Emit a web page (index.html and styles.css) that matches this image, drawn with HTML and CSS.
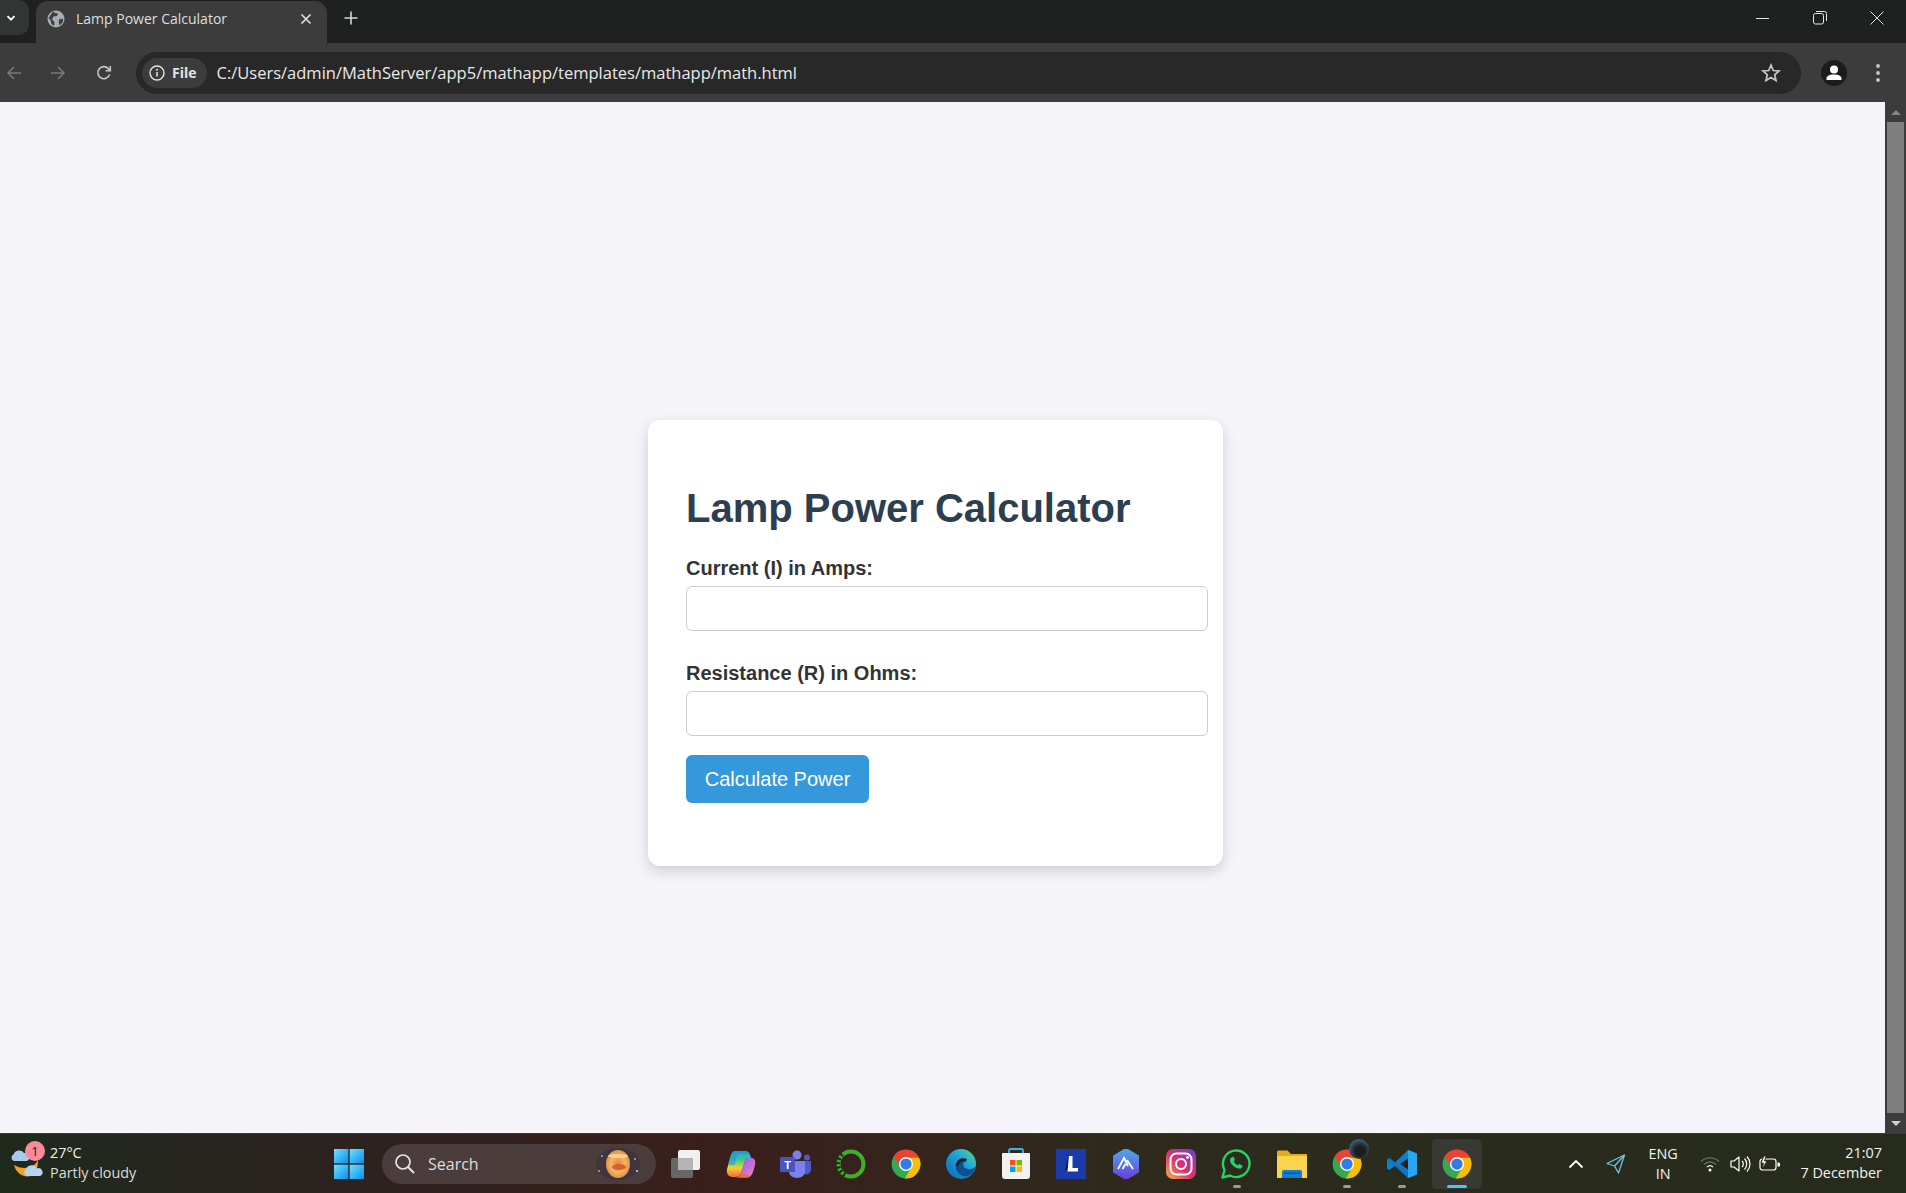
FILE: index.html
```html
<!DOCTYPE html>
<html lang="en">
<head>
  <meta charset="UTF-8" />
  <meta name="viewport" content="width=device-width, initial-scale=1.0"/>
  <title>Lamp Power Calculator</title>
  <link rel="stylesheet" href="styles.css">
</head>
<body>
  <svg class="defs" width="0" height="0">
    <symbol id="chrome" viewBox="0 0 24 24">
      <circle cx="12" cy="12" r="11.5" fill="#34a853"/>
      <path d="M2.1 6.2A11.5 11.5 0 0 1 22.4 7H12L7.6 14.6Z" fill="#ea4335"/>
      <path d="M22.4 7A11.5 11.5 0 0 1 11 23.5L16.4 14.6L12 7Z" fill="#fbbc04"/>
      <circle cx="12" cy="12" r="5.6" fill="#fff"/>
      <circle cx="12" cy="12" r="4.5" fill="#2f7de8"/>
    </symbol>
    <linearGradient id="winblue" x1="0" y1="0" x2="1" y2="1">
      <stop offset="0" stop-color="#6fe3fb"/>
      <stop offset="1" stop-color="#0a8cf0"/>
    </linearGradient>
    <linearGradient id="igrad" x1="0" y1="1" x2="1" y2="0">
      <stop offset="0" stop-color="#fcb045"/>
      <stop offset=".45" stop-color="#e1306c"/>
      <stop offset="1" stop-color="#6a3fd0"/>
    </linearGradient>
    <linearGradient id="edgegrad" x1="0" y1="1" x2="1" y2="0">
      <stop offset="0" stop-color="#0b62b5"/>
      <stop offset=".6" stop-color="#1fa7dc"/>
      <stop offset="1" stop-color="#5fdc7c"/>
    </linearGradient>
    <linearGradient id="hexgrad" x1="0" y1="0" x2="0" y2="1">
      <stop offset="0" stop-color="#4fa8e8"/>
      <stop offset="1" stop-color="#6a3fe0"/>
    </linearGradient>
    <linearGradient id="copright" x1="0" y1="0" x2="1" y2="1">
      <stop offset="0" stop-color="#7a6ff0"/>
      <stop offset=".55" stop-color="#c56be0"/>
      <stop offset="1" stop-color="#f58ab0"/>
    </linearGradient>
    <linearGradient id="copleft" x1="0" y1="0" x2="0" y2="1">
      <stop offset="0" stop-color="#1ba8d8"/>
      <stop offset=".35" stop-color="#3ecb8a"/>
      <stop offset=".65" stop-color="#f5d030"/>
      <stop offset="1" stop-color="#f06a3a"/>
    </linearGradient>
    <radialGradient id="planet" cx=".5" cy=".5" r=".55">
      <stop offset="0" stop-color="#e8823a"/>
      <stop offset=".55" stop-color="#f4b566"/>
      <stop offset="1" stop-color="#d98a3c"/>
    </radialGradient>
  </svg>

  <header class="chrome">
    <div class="tabstrip">
      <div class="tab-search">
        <svg width="12" height="12" viewBox="0 0 12 12"><path d="M2.5 4.2 6 7.7l3.5-3.5" fill="none" stroke="#fff" stroke-width="1.8"/></svg>
      </div>
      <div class="tab">
        <svg class="favicon" width="18" height="18" viewBox="0 0 18 18">
          <circle cx="9" cy="9" r="8.5" fill="#a9adb3"/>
          <path d="M6 1.5 9 3.5 11 3 10 6 6.5 6.5 5 9.5 7.5 12 7 16 4.5 14 3.5 10 1.5 8ZM12 9.5l4.2-.8-.4 3.3-3 3.5-1-3Z" fill="#3d3e40"/>
        </svg>
        <span class="tab-title">Lamp Power Calculator</span>
        <svg class="tab-close" width="12" height="12" viewBox="0 0 12 12"><path d="M1.5 1.5l9 9m0-9l-9 9" stroke="#e3e3e3" stroke-width="1.6"/></svg>
      </div>
      <svg class="newtab" width="14" height="14" viewBox="0 0 14 14"><path d="M7 .5v13M.5 7h13" stroke="#d5d5d5" stroke-width="1.6"/></svg>
      <div class="winctl">
        <svg width="14" height="14" viewBox="0 0 14 14"><path d="M0 7.5h13" stroke="#e6e6e6" stroke-width="1"/></svg>
        <svg width="14" height="14" viewBox="0 0 14 14"><rect x=".5" y="2.5" width="10" height="10.5" rx="2" fill="none" stroke="#e6e6e6"/><path d="M3 .5h8.500a2 2 0 0 1 2 2V10" fill="none" stroke="#e6e6e6"/></svg>
        <svg width="14" height="14" viewBox="0 0 14 14"><path d="M.5.5l13 13m0-13l-13 13" stroke="#e6e6e6" stroke-width="1"/></svg>
      </div>
    </div>
    <div class="toolbar">
      <svg class="nav" width="16" height="16" viewBox="0 0 16 16"><path d="M15 8H2M8 2 2 8l6 6" fill="none" stroke="#797a7b" stroke-width="1.6"/></svg>
      <svg class="nav" width="16" height="16" viewBox="0 0 16 16"><path d="M1 8h13M8 2l6 6-6 6" fill="none" stroke="#797a7b" stroke-width="1.6"/></svg>
      <svg class="nav reload" width="16" height="16" viewBox="0 0 16 16"><path d="M13.600 9.500A6 6 0 1 1 12.300 3.600L14 5.500M14.300 1v4.700H9.600" fill="none" stroke="#c7c7c7" stroke-width="1.6"/></svg>
      <div class="omnibox">
        <div class="chip">
          <svg width="16" height="16" viewBox="0 0 16 16"><circle cx="8" cy="8" r="7" fill="none" stroke="#e3e3e3" stroke-width="1.400"/><path d="M8 7v4.500" stroke="#e3e3e3" stroke-width="1.500"/><circle cx="8" cy="4.800" r="1" fill="#e3e3e3"/></svg>
          <span>File</span>
        </div>
        <span class="url">C:/Users/admin/MathServer/app5/mathapp/templates/mathapp/math.html</span>
        <svg class="star" width="20" height="20" viewBox="0 0 20 20"><path d="M10 2.200l2.300 5.300 5.700.5-4.300 3.800 1.300 5.600-5-3-5 3 1.300-5.600L2 8l5.700-.5Z" fill="none" stroke="#c7c7c7" stroke-width="1.700"/></svg>
      </div>
      <div class="avatar">
        <svg width="18" height="18" viewBox="0 0 18 18"><circle cx="9" cy="5.500" r="4" fill="#fff"/><path d="M1.500 16v-1.500C1.500 12 4.500 10.500 9 10.500s7.500 1.500 7.500 4V16Z" fill="#fff"/></svg>
      </div>
      <svg class="kebab" width="6" height="20" viewBox="0 0 6 20"><circle cx="3" cy="3" r="1.900" fill="#c7c7c7"/><circle cx="3" cy="10" r="1.900" fill="#c7c7c7"/><circle cx="3" cy="17" r="1.900" fill="#c7c7c7"/></svg>
    </div>
  </header>

  <div class="viewport">
    <main class="page">
      <div class="card">
        <h1>Lamp Power Calculator</h1>
        <form class="calc-form" onsubmit="return false">
          <label for="current">Current (I) in Amps:</label>
          <input type="text" id="current" />
          <label for="resistance">Resistance (R) in Ohms:</label>
          <input type="text" id="resistance" />
          <button type="submit">Calculate Power</button>
        </form>
      </div>
    </main>
    <div class="scrollbar">
      <span class="arrow arrow-up"></span>
      <div class="thumb"></div>
      <span class="arrow arrow-down"></span>
    </div>
  </div>

  <footer class="taskbar">
    <div class="weather">
      <div class="weather-icon">
        <svg width="34" height="36" viewBox="0 0 34 36">
          <path d="M4 19C6 27 13 32 21 30 25 29 28 25 28 13 26 21 14 25 4 19Z" fill="#f5a21e"/>
          <path d="M4 15a3.500 3.500 0 0 1-.5-6.500A6 6 0 0 1 14 7a3.800 3.800 0 0 1 3 8Z" fill="#a9c8ec"/>
          <path d="M17 30a3.500 3.500 0 0 1-1-6.500 6 6 0 0 1 11-1 3.900 3.900 0 0 1 3 7.500Z" fill="#b7d3f2"/>
        </svg>
        <span class="badge">1</span>
      </div>
      <div class="weather-text">
        <span>27°C</span>
        <span class="weather-sub">Partly cloudy</span>
      </div>
    </div>

    <svg class="winlogo" width="30" height="30" viewBox="0 0 30 30">
      <g fill="url(#winblue)">
        <rect x="0" y="0" width="14.300" height="14.300"/>
        <rect x="15.700" y="0" width="14.300" height="14.300"/>
        <rect x="0" y="15.700" width="14.300" height="14.300"/>
        <rect x="15.700" y="15.700" width="14.300" height="14.300"/>
      </g>
    </svg>

    <div class="searchbox">
      <svg width="21" height="21" viewBox="0 0 21 21"><circle cx="9" cy="9" r="7" fill="none" stroke="#e8e6e6" stroke-width="1.700"/><path d="M14 14l6 6" stroke="#e8e6e6" stroke-width="1.900"/></svg>
      <span>Search</span>
      <svg class="planet" width="48" height="34" viewBox="0 0 48 34">
        <ellipse cx="24" cy="17" rx="22" ry="16" fill="#40343f"/>
        <circle cx="8" cy="9" r=".8" fill="#fff"/><circle cx="5" cy="24" r=".8" fill="#fff"/><circle cx="41" cy="12" r=".8" fill="#fff"/><circle cx="43" cy="24" r="1" fill="#cfd6ff"/>
        <ellipse cx="24" cy="17" rx="12" ry="14" fill="url(#planet)"/>
        <ellipse cx="24" cy="9" rx="10" ry="2" fill="#f7cf90"/>
        <ellipse cx="25" cy="20" rx="7" ry="3" fill="#d8602a"/>
      </svg>
    </div>

    <div class="apps">
      <div class="app">
        <svg width="32" height="30" viewBox="0 0 32 30">
          <rect x="8" y="1" width="22" height="20" rx="2" fill="#f0f0f0"/>
          <rect x="1" y="9" width="22" height="20" rx="2" fill="#6c6c6c" opacity=".92"/>
          <rect x="8" y="9" width="15" height="12" fill="#b4b4b4"/>
        </svg>
      </div>
      <div class="app">
        <svg width="30" height="28" viewBox="0 0 30 28">
          <path d="M9 1H19C22 1 23.500 2.500 24.500 6L25 8H22.500C20.500 8 19.500 9 19 11L15 23.500C14 26 12 27 10 27H6.500C2 27 0 23 1.200 18.500L4 8C5 4 6.500 1 9 1Z" fill="url(#copleft)"/>
          <path d="M5 7C6 3.500 7 1 9 1H19C21 1 22.500 2 23.500 4H14.500C12.500 4 11.500 5.500 10.500 8L8.500 15H2.900Z" fill="#1f8fe8" opacity=".55"/>
          <path d="M22.500 8H25.500C28.500 8 30 11 29 15L27 22C25.800 25.500 24 27.500 20.500 27.500H10C12 27.500 14 26.500 15 23.500L19 11C19.500 9 20.500 8 22.500 8Z" fill="url(#copright)"/>
          <path d="M10 27.500H20.500C22 27.500 23 27 24.200 26 20 24.500 17 22 14.800 24 14 26 12 27.500 10 27.500Z" fill="#f2683c"/>
        </svg>
      </div>
      <div class="app">
        <svg width="32" height="28" viewBox="0 0 32 28">
          <circle cx="17" cy="5" r="4.500" fill="#7b83eb"/>
          <circle cx="27" cy="7.500" r="3" fill="#5059c9"/>
          <path d="M22 11h9v9a5 5 0 0 1-7 4Z" fill="#5059c9"/>
          <path d="M9 11h16v11a8 6 0 0 1-16 0Z" fill="#7b83eb"/>
          <rect x="0" y="7" width="15" height="15" rx="1.500" fill="#4b53bc"/>
          <text x="7.500" y="19" class="teams-t">T</text>
        </svg>
      </div>
      <div class="app">
        <svg width="30" height="30" viewBox="0 0 30 30">
          <circle cx="15" cy="15" r="12.500" fill="none" stroke="#3fae2a" stroke-width="4"/>
          <path d="M9 26A12.500 12.500 0 0 1 8 4" fill="none" stroke="#1a2a15" stroke-width="4.500" stroke-dasharray="2 2.500"/>
        </svg>
      </div>
      <div class="app"><svg width="30" height="30"><use href="#chrome"/></svg></div>
      <div class="app">
        <svg width="30" height="30" viewBox="0 0 30 30">
          <circle cx="15" cy="15" r="15" fill="url(#edgegrad)"/>
          <path d="M29.800 17c-1.500 2.500-5 3.500-8 3-3.500-.5-5-2.800-4.500-5.300.3-1.700 1.600-2.700 3-3.200-2-1.500-6-1.500-8.500 1-3 3-2.500 8 .5 11.500 2 2.300 5 3.500 7 3.500C25 27 28.500 23 29.800 17Z" fill="#0d4f8f"/>
          <path d="M20.300 11.500c-2-1.200-5.500-1-7.500 1.200-1 1.200-1.600 2.600-1.700 4.300" fill="none" stroke="#2a1c1a" stroke-width="3"/>
        </svg>
      </div>
      <div class="app">
        <svg width="30" height="32" viewBox="0 0 30 32">
          <path d="M8 5V2.500A1.500 1.500 0 0 1 9.500 1h11A1.500 1.500 0 0 1 22 2.500V5" fill="none" stroke="#37b5ee" stroke-width="1.800"/>
          <path d="M2 5h26a1 1 0 0 1 1 1v22a3 3 0 0 1-3 3H4a3 3 0 0 1-3-3V6a1 1 0 0 1 1-1Z" fill="#f2f2f2"/>
          <rect x="9" y="12" width="5.500" height="5.500" fill="#f25022"/><rect x="15.500" y="12" width="5.500" height="5.500" fill="#7fba00"/>
          <rect x="9" y="18.500" width="5.500" height="5.500" fill="#00a4ef"/><rect x="15.500" y="18.500" width="5.500" height="5.500" fill="#ffb900"/>
        </svg>
      </div>
      <div class="app">
        <svg width="30" height="30" viewBox="0 0 30 30">
          <rect width="30" height="30" fill="#1c3aa9"/>
          <path d="M9 21.500 12 8v13.500Z" fill="#0f1f5c"/>
          <path d="M13 7h3.500v12H22v3.500H11.500Z" fill="#fff"/>
        </svg>
      </div>
      <div class="app">
        <svg width="28" height="30" viewBox="0 0 28 30">
          <path d="M14 0 26 7v16l-12 7L2 23V7Z" fill="url(#hexgrad)" stroke="url(#hexgrad)" stroke-width="2" stroke-linejoin="round"/>
          <path d="M6 20 12 9l4 8M15 11l6 9M10.500 20l3-5" fill="none" stroke="#fff" stroke-width="1.800"/>
        </svg>
      </div>
      <div class="app">
        <svg width="30" height="30" viewBox="0 0 30 30">
          <rect width="30" height="30" rx="7" fill="url(#igrad)"/>
          <rect x="4.500" y="4.500" width="21" height="21" rx="6" fill="none" stroke="#fff" stroke-width="2"/>
          <circle cx="15" cy="15" r="5" fill="none" stroke="#fff" stroke-width="2"/>
          <circle cx="21.500" cy="8.500" r="1.400" fill="#fff"/>
        </svg>
      </div>
      <div class="app open">
        <svg width="30" height="30" viewBox="0 0 30 30">
          <path d="M1.500 28.500 3.500 21A13.300 13.300 0 1 1 9 26.500Z" fill="none" stroke="#25d366" stroke-width="2.400" stroke-linejoin="round"/>
          <path d="M10.500 8.500c1-1 2-1 2.500 0l1 2.500-1.200 1.500c.8 1.800 2.200 3 4 3.800L18.300 15l2.700 1.200c.8.500.5 1.500 0 2.300-1 1.300-2.500 1.500-4.500.8-4-1.400-7-4.500-7.500-7.800-.2-1.300.5-2.200 1.500-3Z" fill="#25d366"/>
        </svg>
      </div>
      <div class="app">
        <svg width="30" height="28" viewBox="0 0 30 28">
          <path d="M0 2a1.500 1.500 0 0 1 1.500-1.500h9L14 4h16v7H0Z" fill="#e3ac1b"/>
          <rect y="6" width="30" height="22" fill="#fcd34d"/>
          <path d="M5 28v-6a2 2 0 0 1 2-2h16a2 2 0 0 1 2 2v6Z" fill="#0f7ed4"/>
          <rect x="7" y="22.500" width="16" height="1.500" fill="#0a5aa0"/>
        </svg>
      </div>
      <div class="app open">
        <svg width="30" height="30"><use href="#chrome"/></svg>
        <span class="profile-pic"></span>
      </div>
      <div class="app open">
        <svg width="30" height="30" viewBox="0 0 30 30">
          <path d="M21 1 30 4.500v21L21 29 8 16.500 2.500 21 0 19.500v-9L2.500 9 8 13.500Z" fill="#0f7fcf"/>
          <path d="M21 1 30 4.500v21L21 29Z" fill="#2aa5ef"/>
          <path d="M21 9.500 13 15l8 5.500Z" fill="#2a1f1c"/>
          <path d="M0 10.500 2.500 9 21 23v6L0 10.500Z" fill="#0b6fbd" opacity=".6"/>
        </svg>
      </div>
      <div class="app active"><svg width="30" height="30"><use href="#chrome"/></svg></div>
    </div>

    <div class="tray">
      <svg width="16" height="10" viewBox="0 0 16 10"><path d="M1.500 8.500 8 2l6.500 6.500" fill="none" stroke="#fff" stroke-width="1.800"/></svg>
      <svg class="tray-loc" width="20" height="20" viewBox="0 0 20 20"><path d="M18.500 1 1 9.500l7.500 2.500 4 7Z" fill="none" stroke="#6ec6e8" stroke-width="1.300" stroke-linejoin="round"/><path d="M18.500 1 8.500 12" stroke="#6ec6e8" stroke-width="1.300"/></svg>
      <div class="lang"><span>ENG</span><span>IN</span></div>
      <svg class="tray-wifi" width="20" height="16" viewBox="0 0 20 16">
        <path d="M1 5.500a13 13 0 0 1 18 0" fill="none" stroke="#6c7064" stroke-width="1.300"/>
        <path d="M4 8.500a8.500 8.500 0 0 1 12 0" fill="none" stroke="#6c7064" stroke-width="1.300"/>
        <path d="M7 11a4.500 4.500 0 0 1 6 0" fill="none" stroke="#fff" stroke-width="1.300"/>
        <circle cx="10" cy="14" r="1.500" fill="#fff"/>
      </svg>
      <svg class="tray-vol" width="21" height="18" viewBox="0 0 21 18"><path d="M1 6h3l5-4v14l-5-4H1Z" fill="none" stroke="#fff" stroke-width="1.200" stroke-linejoin="round"/><path d="M12 6a4 4 0 0 1 0 6M14.500 3.500a8 8 0 0 1 0 11M17 1.500a11 11 0 0 1 0 15" fill="none" stroke="#fff" stroke-width="1.200"/></svg>
      <svg class="tray-bat" width="21" height="16" viewBox="0 0 21 16"><rect x="1" y="3" width="16" height="11" rx="2.500" fill="none" stroke="#fff" stroke-width="1.200"/><path d="M18.500 6.500h1a1 1 0 0 1 0 4h-1Z" fill="#fff"/><path d="M5 0 2 7h2.500L3 13l5-8H5.500L7 0Z" fill="#fff" stroke="#272b1c" stroke-width=".8"/></svg>
      <div class="clock"><span>21:07</span><span>7 December</span></div>
    </div>
  </footer>
</body>
</html>
```

FILE: styles.css
```css
* {
  box-sizing: border-box;
}

html, body {
  margin: 0;
  height: 100%;
  overflow: hidden;
}

body {
  display: flex;
  flex-direction: column;
  height: 1193px;
  background: #f4f4f9;
  font-family: 'Open Sans', 'Noto Sans', sans-serif;
}

.defs {
  position: absolute;
}

/* browser frame */
.chrome {
  background: #3c3c3c;
  color: #e3e3e3;
}

.tabstrip {
  display: flex;
  align-items: center;
  height: 43px;
  background: #1f2120;
}

.tab-search {
  display: flex;
  align-items: center;
  justify-content: center;
  width: 29px;
  height: 35px;
  margin: 0 7px 8px 0;
  padding-right: 7px;
  background: #333534;
  border-radius: 0 10px 10px 0;
}

.tab {
  display: flex;
  align-items: center;
  align-self: flex-end;
  width: 291px;
  height: 42px;
  padding: 0 15px 6px 11px;
  background: #3c3c3c;
  border-radius: 12px 12px 0 0;
}

.tab-title {
  flex: 1;
  margin: -2px 0 0 11px;
  font-size: 14px;
  color: #dfdfdf;
}

.newtab {
  margin: 0 0 8px 17px;
}

.winctl {
  display: flex;
  gap: 43px;
  margin: 0 22px 8px auto;
}

.toolbar {
  display: flex;
  align-items: center;
  height: 59px;
  padding-left: 6px;
  border-radius: 0 12px 0 0;
}

.nav {
  margin-right: 28px;
}

.reload {
  margin: 0 24px -1px 2px;
}

.omnibox {
  display: flex;
  align-items: center;
  width: 1665px;
  height: 42px;
  padding: 0 20px 0 6px;
  background: #282828;
  border-radius: 21px;
}

.chip {
  display: flex;
  align-items: center;
  gap: 7px;
  height: 30px;
  padding: 0 10px 0 7px;
  background: #3c3c3c;
  border-radius: 15px;
  font-size: 14px;
  font-weight: 700;
}

.url {
  flex: 1;
  margin-left: 10px;
  font-size: 16.500px;
  color: #e8e8e8;
}

.avatar {
  display: flex;
  align-items: center;
  justify-content: center;
  width: 26px;
  height: 26px;
  margin-left: 20px;
  background: #1c1c1c;
  border-radius: 50%;
}

.kebab {
  margin-left: 28px;
}

/* page */
.viewport {
  display: flex;
  flex: 1;
  min-height: 0;
}

.page {
  flex: 1;
  padding: 318px 0 0 648px;
  background: #f4f4f9;
}

.card {
  width: 575px;
  height: 446px;
  padding: 65px 0 0 38px;
  background: #fff;
  border-radius: 12px;
  box-shadow: 0 5px 14px rgba(0, 0, 0, 0.16);
}

h1 {
  margin: 0 0 26px;
  font-family: 'Liberation Sans', Arial, sans-serif;
  font-size: 40px;
  line-height: 46px;
  font-weight: 700;
  color: #2c3e50;
}

.calc-form {
  display: flex;
  flex-direction: column;
  align-items: flex-start;
  font-family: 'Liberation Sans', Arial, sans-serif;
}

label {
  margin-bottom: 6px;
  font-size: 20px;
  line-height: 23px;
  font-weight: 700;
  color: #333;
}

input {
  width: 522px;
  height: 45px;
  margin-bottom: 31px;
  border: 1px solid #ccc;
  border-radius: 6px;
  background: #fff;
}

button {
  width: 183px;
  height: 48px;
  margin-top: -12px;
  border: none;
  border-radius: 6px;
  background: #3498db;
  color: #fff;
  font-family: 'Liberation Sans', Arial, sans-serif;
  font-size: 20px;
}

.scrollbar {
  display: flex;
  flex-direction: column;
  align-items: center;
  width: 21px;
  background: #3c3c3c;
}

.arrow {
  flex: none;
  width: 0;
  height: 0;
  margin: 8px 0 7px;
  border-left: 5px solid transparent;
  border-right: 5px solid transparent;
}

.arrow-up {
  border-bottom: 5px solid #858585;
}

.arrow-down {
  border-top: 5px solid #d0d0d0;
}

.thumb {
  flex: 1;
  width: 17px;
  background: #7f7f7f;
}

/* windows taskbar */
.taskbar {
  display: flex;
  align-items: center;
  flex: none;
  height: 60px;
  padding-left: 10px;
  border-top: 1px solid #3a3a3a;
  background: linear-gradient(90deg, #1e2a1c 0%, #2a2320 15%, #3a1f1c 38%, #2e2a1c 60%, #292c1c 75%, #272b1c 100%);
  color: #f2f2f2;
  font-size: 14.400px;
}

.weather {
  display: flex;
  align-items: center;
  width: 324px;
}

.weather-icon {
  position: relative;
  width: 34px;
  height: 36px;
  margin-right: 6px;
}

.badge {
  position: absolute;
  top: -5px;
  left: 15px;
  width: 20px;
  height: 20px;
  border-radius: 50%;
  background: #f98a9b;
  color: #222;
  font-size: 13px;
  line-height: 20px;
  text-align: center;
}

.weather-text {
  display: flex;
  flex-direction: column;
  margin-top: -2px;
  line-height: 20px;
}

.weather-sub {
  color: #dcdcdc;
}

.winlogo {
  margin-right: 18px;
}

.searchbox {
  display: flex;
  align-items: center;
  width: 274px;
  height: 40px;
  padding: 0 14px 0 12px;
  border-radius: 20px;
  background: #4b3d3b;
  color: #ddd;
  font-size: 16px;
}

.searchbox span {
  margin-left: 13px;
}

.planet {
  margin-left: auto;
}

.apps {
  display: flex;
  margin-left: 2px;
}

.app {
  position: relative;
  display: flex;
  align-items: center;
  justify-content: center;
  width: 55.100px;
  height: 50px;
}

.app.open::after,
.app.active::after {
  content: "";
  position: absolute;
  bottom: 1px;
  left: 24px;
  width: 8px;
  height: 3px;
  border-radius: 2px;
  background: #9a9a9a;
}

.app.active {
  width: 50px;
  margin: 0 2.600px 0 2.500px;
  border-radius: 5px;
  background: #3a3832;
}

.app.active::after {
  left: 15px;
  width: 20px;
  background: #4cc2ff;
}

.profile-pic {
  position: absolute;
  top: 0;
  right: 5px;
  width: 20px;
  height: 20px;
  border-radius: 50%;
  background: radial-gradient(circle at 55% 60%, #1c1d22 30%, #4f93aa 100%);
}

.teams-t {
  fill: #fff;
  font-family: 'Liberation Sans', sans-serif;
  font-size: 11px;
  font-weight: 700;
  text-anchor: middle;
}

.tray {
  display: flex;
  align-items: center;
  flex: 1;
  padding-left: 84px;
}

.tray-loc {
  margin-left: 22px;
}

.lang {
  display: flex;
  flex-direction: column;
  align-items: center;
  margin: 0 22px 0 22px;
  line-height: 20px;
}

.tray-vol {
  margin-left: 10px;
}

.tray-bat {
  margin-left: 8px;
}

.clock {
  display: flex;
  flex-direction: column;
  align-items: flex-end;
  margin-left: auto;
  margin-right: 24px;
  margin-top: -1px;
  line-height: 20px;
}
```
